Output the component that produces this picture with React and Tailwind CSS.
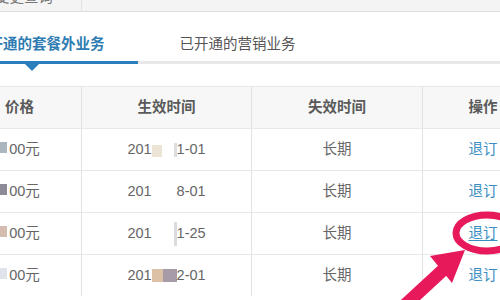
export default function App() {
  const rows = [
    { p: "#aab5c0", d: "1-01", gap: "a", u: false },
    { p: "#8e8b98", d: "8-01", gap: "b", u: false },
    { p: "#d4bcae", d: "1-25", gap: "c", u: true },
    { p: "#dfe3ec", d: "2-01", gap: "d", u: false },
  ];
  const gapContent = (g) => {
    if (g === "a")
      return (
        <span className="flex items-center w-[25px] h-[16px]">
          <span className="w-[13px] h-[12px] bg-[#ece5d5] mt-[3px]" />
          <span className="ml-[12px] w-[3px] h-[14px] bg-[#dedede]" />
        </span>
      );
    if (g === "c")
      return (
        <span className="flex items-center justify-end w-[25px] h-[24px]">
          <span className="w-[3px] h-[24px] bg-[#dcdce0]" />
        </span>
      );
    if (g === "d")
      return (
        <span className="flex items-center w-[25px] h-[16px]">
          <span className="w-[13px] h-[13px] bg-[#dcc1a6]" />
          <span className="w-[15px] h-[13px] bg-[#a89ba8]" />
        </span>
      );
    return <span className="w-[25px]" />;
  };
  return (
    <div className="relative w-[500px] h-[300px] overflow-hidden bg-white font-['Liberation_Sans','Noto_Sans_CJK_SC',sans-serif]">
      {/* top bar */}
      <div className="h-[12px] bg-[#f4f4f4] border-b border-[#dcdcdc] flex overflow-hidden">
        <div className="w-[82px] shrink-0 border-r border-[#e2e2e2] flex justify-end pr-[28px] overflow-hidden">
          <span className="-mt-[13px] text-[14.5px] leading-[20px] text-[#777] whitespace-nowrap">业务变更查询</span>
        </div>
      </div>
      {/* tabs */}
      <div className="h-[49px] flex items-start pt-[22px] text-[14.5px] leading-[20px] whitespace-nowrap">
        <span className="ml-[-26px] text-[#2e7cb2] font-bold">已开通的套餐外业务</span>
        <span className="ml-[75px] text-[#555]">已开通的营销业务</span>
      </div>
      <div className="relative h-[3px] bg-[#e8e8e8]">
        <div className="w-[138px] h-[3px] bg-[#2a7fbc]" />
        <div className="absolute left-[25px] top-[3px] w-0 h-0 border-l-[7px] border-r-[7px] border-t-[7px] border-l-transparent border-r-transparent border-t-[#2a7fbc]" />
      </div>
      {/* table */}
      <div className="mt-[22px] ml-[-42px] w-[585px] text-[14.5px]">
        <div className="flex h-[42px] border-t border-[#e6e6e6] bg-[#f7f7f7] text-[#5a5a5a] font-bold">
          <div className="w-[124px] flex items-center justify-center border-r border-[#e2e2e2]">价格</div>
          <div className="w-[170px] flex items-center justify-center border-r border-[#e2e2e2]">生效时间</div>
          <div className="w-[171px] flex items-center justify-center border-r border-[#e2e2e2]">失效时间</div>
          <div className="w-[120px] flex items-center justify-center">操作</div>
        </div>
        {rows.map((r, i) => (
          <div key={i} className="flex h-[42px] border-t border-[#e8e8e8] text-[#666]">
            <div className="w-[124px] flex items-center justify-center border-r border-[#e2e2e2]">
              <span className="w-[8px] h-[11px] mr-[2px] -mt-[4px]" style={{ backgroundColor: r.p }} />
              <span>00元</span>
            </div>
            <div className="w-[170px] flex items-center justify-center border-r border-[#e2e2e2]">
              <span>201</span>
              {gapContent(r.gap)}
              <span>{r.d}</span>
            </div>
            <div className="w-[171px] flex items-center justify-center border-r border-[#e2e2e2]">长期</div>
            <div className="w-[120px] flex items-center justify-center">
              <span className={"text-[#3a8dc1] " + (r.u ? "underline underline-offset-2" : "")}>退订</span>
            </div>
          </div>
        ))}
      </div>
      {/* annotation */}
      <svg className="absolute inset-0 pointer-events-none" width="500" height="300" viewBox="0 0 500 300">
        <ellipse cx="487" cy="233" rx="31" ry="18" fill="none" stroke="#e8195b" strokeWidth="7" />
        <line x1="404" y1="306" x2="443" y2="270" stroke="#e8195b" strokeWidth="13" />
        <polygon points="465,250 430,256 452,283" fill="#e8195b" />
      </svg>
    </div>
  );
}
